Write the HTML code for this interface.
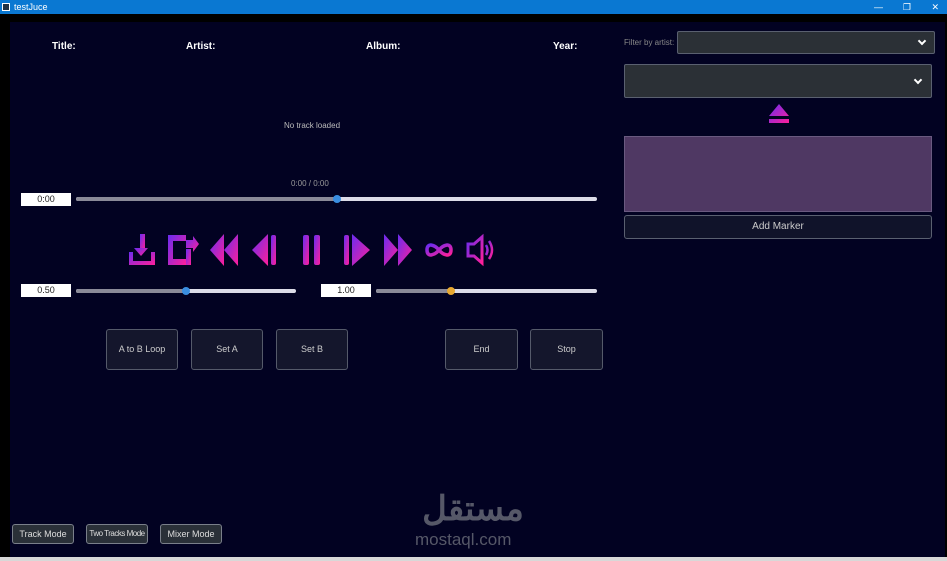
<!DOCTYPE html>
<html><head><meta charset="utf-8"><style>
*{margin:0;padding:0;box-sizing:border-box}
body{width:947px;height:561px;background:#000;position:relative;overflow:hidden;font-family:"Liberation Sans",sans-serif;color:#ddd}
.a{position:absolute}
.tb{left:0;top:0;width:947px;height:14px;background:#0a78d2;color:#fff;font-size:9px;line-height:14px}
.panel{left:10px;top:22px;width:935px;height:535px;background:#020222}
.bot{left:0;top:557px;width:947px;height:4px;background:#d8d8d8}
.lbl{font-size:10px;font-weight:bold;color:#fff}
.box{background:#fff;color:#222;font-size:9px;text-align:center;line-height:13px;height:13px;width:50px}
.tr{height:4px;border-radius:2px;background:#dcdce8}
.th{width:8px;height:8px;border-radius:50%;top:-2px}
.btn{border:1px solid #555a6a;border-radius:3px;background:#14162c;color:#ccc;font-size:9px;text-align:center}
.mb{border:1px solid #7a7f8a;border-radius:3px;background:#2a3038;color:#ddd;font-size:9px;text-align:center;height:20px;line-height:18px}
.dd{background:#2b3036;border:1px solid #5a6070;border-radius:2px}
.chev{position:absolute;width:6px;height:6px;border-right:2px solid #fff;border-bottom:2px solid #fff;transform:rotate(45deg)}
</style></head><body>
<div class="a tb"><span style="display:inline-block;width:8px;height:8px;border:1px solid #fff;margin:0 4px 0 2px;vertical-align:-1px;background:#234"></span>testJuce
<span class="a" style="right:64px;top:0">—</span><span class="a" style="right:36px;top:0">❐</span><span class="a" style="right:8px;top:0">✕</span></div>
<div class="a panel"></div>
<div class="a lbl" style="left:52px;top:41px">Title:</div>
<div class="a lbl" style="left:186px;top:41px">Artist:</div>
<div class="a lbl" style="left:366px;top:41px">Album:</div>
<div class="a lbl" style="left:553px;top:41px">Year:</div>
<div class="a" style="left:284px;top:121px;font-size:8px;color:#bbb">No track loaded</div>
<div class="a" style="left:291px;top:179px;font-size:8px;color:#999">0:00 / 0:00</div>
<div class="a box" style="left:21px;top:193px">0:00</div>
<div class="a tr" style="left:76px;top:197px;width:521px"><div class="a tr" style="left:0;top:0;width:261px;background:#8a8a98"></div><div class="a th" style="left:257px;background:#3a8ee0"></div></div>
<div class="a box" style="left:21px;top:284px">0.50</div>
<div class="a tr" style="left:76px;top:289px;width:220px"><div class="a tr" style="left:0;top:0;width:110px;background:#8a8a98"></div><div class="a th" style="left:106px;background:#3a8ee0"></div></div>
<div class="a box" style="left:321px;top:284px">1.00</div>
<div class="a tr" style="left:376px;top:289px;width:221px"><div class="a tr" style="left:0;top:0;width:75px;background:#8a8a98"></div><div class="a th" style="left:71px;background:#e8a830"></div></div>
<svg class="a" style="left:120px;top:228px" width="380" height="44" viewBox="120 228 380 44">
<defs><linearGradient id="g" x1="0" y1="0" x2="1" y2="1"><stop offset="0" stop-color="#6a2cf0"/><stop offset="1" stop-color="#ff1f9a"/></linearGradient></defs>
<g fill="url(#g)" stroke="none">
<rect x="140" y="234" width="5" height="16"/><path d="M134 248h14l-7 8z"/>
<path d="M129 252h4v9h18v-9h4v13h-26z"/>
<path d="M168 235h18v6h-13v18h13v6h-18z"/><rect x="186" y="249" width="5" height="16"/><path d="M186 240h7v-4l6 8-6 8v-4h-7z"/>
<path d="M224 234v32l-14-16z"/><path d="M238 234v32l-14-16z"/>
<path d="M268 234v32l-16-16z"/><rect x="271" y="235" width="5" height="30" rx="2"/>
<rect x="303" y="235" width="6" height="30" rx="2"/><rect x="314" y="235" width="6" height="30" rx="2"/>
<rect x="344" y="235" width="5" height="30" rx="2"/><path d="M352 234v32l18-16z"/>
<path d="M384 234v32l14-16z"/><path d="M398 234v32l14-16z"/>
</g>
<path d="M439 250c-4-5-12-8-12 0s8 5 12 0 12-8 12 0-8 5-12 0z" fill="none" stroke="url(#g)" stroke-width="3.5"/>
<path d="M468 244h6l8-7v26l-8-7h-6z" fill="none" stroke="url(#g)" stroke-width="3"/>
<path d="M486 245q3 5 0 10M489 241q6 9 0 18" fill="none" stroke="url(#g)" stroke-width="2.5"/>
</svg>
<div class="a btn" style="left:106px;top:329px;width:72px;height:41px;line-height:39px">A to B Loop</div>
<div class="a btn" style="left:191px;top:329px;width:72px;height:41px;line-height:39px">Set A</div>
<div class="a btn" style="left:276px;top:329px;width:72px;height:41px;line-height:39px">Set B</div>
<div class="a btn" style="left:445px;top:329px;width:73px;height:41px;line-height:39px">End</div>
<div class="a btn" style="left:530px;top:329px;width:73px;height:41px;line-height:39px">Stop</div>
<div class="a" style="left:624px;top:38px;font-size:8px;color:#888">Filter by artist:</div>
<div class="a dd" style="left:677px;top:31px;width:258px;height:23px"><span class="chev" style="right:9px;top:6px"></span></div>
<div class="a dd" style="left:624px;top:64px;width:308px;height:34px"><span class="chev" style="right:10px;top:12px"></span></div>
<svg class="a" style="left:767px;top:102px" width="24" height="24"><defs><linearGradient id="g2" x1="0" y1="0" x2="1" y2="1"><stop offset="0" stop-color="#6a2cf0"/><stop offset="1" stop-color="#ff1f9a"/></linearGradient></defs><path d="M12 2l10 12h-20z M2 17h20v4h-20z" fill="url(#g2)"/></svg>
<div class="a" style="left:624px;top:136px;width:308px;height:76px;background:#4f3863;border:1px solid #6a5a80"></div>
<div class="a btn" style="left:624px;top:215px;width:308px;height:24px;line-height:22px;font-size:10px;background:#10132a;border-color:#5a6070">Add Marker</div>
<div class="a mb" style="left:12px;top:524px;width:62px">Track Mode</div>
<div class="a mb" style="left:86px;top:524px;width:62px;font-size:8px;letter-spacing:-0.5px">Two Tracks Mode</div>
<div class="a mb" style="left:160px;top:524px;width:62px">Mixer Mode</div>
<div class="a" style="left:415px;top:488px;width:116px;text-align:center;font-size:34px;font-weight:bold;color:#565868;font-family:'Liberation Sans','Noto Sans CJK SC',sans-serif;line-height:42px">مستقل</div>
<div class="a" style="left:415px;top:530px;font-size:17px;color:#565868">mostaql.com</div>
<div class="a bot"></div>
</body></html>
